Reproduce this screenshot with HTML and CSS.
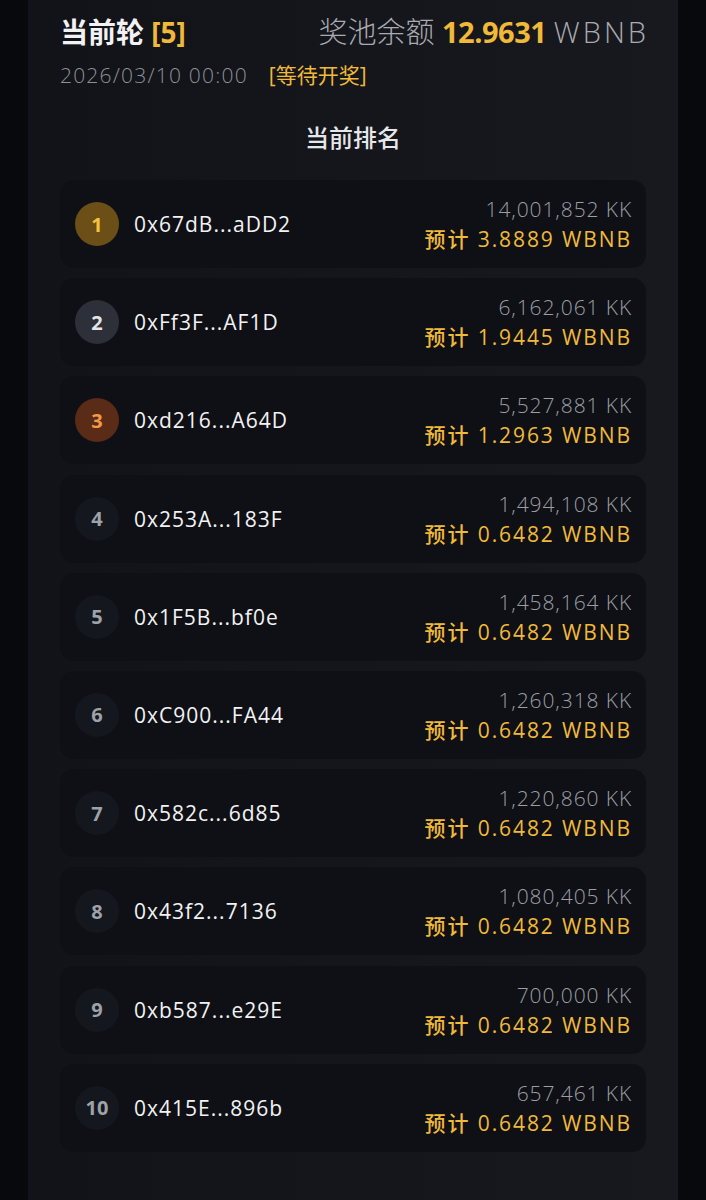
FILE: index.html
```html
<!DOCTYPE html>
<html lang="zh-CN">
<head>
    <meta charset="UTF-8">
    <meta name="viewport" content="width=device-width, initial-scale=1.0">
    <title>当前排名</title>
    <link rel="stylesheet" href="styles.css">
</head>
<body>
    <div class="panel">
        <div class="round-head">
            <div class="round-title">当前轮 <span class="gold">[5]</span></div>
            <div class="pool">奖池余额 <span class="pool-num">12.9631</span> <span class="pool-unit">WBNB</span></div>
        </div>
        <div class="round-sub">
            <span class="round-date">2026/03/10 00:00</span>
            <span class="gold">[等待开奖]</span>
        </div>

        <h2 class="rank-title">当前排名</h2>

        <div id="rank-list" class="rank-list">
            <!-- 排名行由脚本生成 -->
        </div>
    </div>

    <script>
        const ranking = [
            { addr: '0x67dB...aDD2', amount: '14,001,852', reward: '3.8889' },
            { addr: '0xFf3F...AF1D', amount: '6,162,061', reward: '1.9445' },
            { addr: '0xd216...A64D', amount: '5,527,881', reward: '1.2963' },
            { addr: '0x253A...183F', amount: '1,494,108', reward: '0.6482' },
            { addr: '0x1F5B...bf0e', amount: '1,458,164', reward: '0.6482' },
            { addr: '0xC900...FA44', amount: '1,260,318', reward: '0.6482' },
            { addr: '0x582c...6d85', amount: '1,220,860', reward: '0.6482' },
            { addr: '0x43f2...7136', amount: '1,080,405', reward: '0.6482' },
            { addr: '0xb587...e29E', amount: '700,000', reward: '0.6482' },
            { addr: '0x415E...896b', amount: '657,461', reward: '0.6482' }
        ];

        function cargarRanking() {
            const list = document.getElementById('rank-list');
            list.innerHTML = '';

            ranking.forEach((item, index) => {
                const row = document.createElement('div');
                row.classList.add('rank-row');

                const badge = document.createElement('span');
                badge.classList.add('rank-badge');
                if (index < 3) {
                    badge.classList.add('rank-' + (index + 1));
                }
                badge.textContent = index + 1;

                const addr = document.createElement('span');
                addr.classList.add('rank-addr');
                addr.textContent = item.addr;

                const info = document.createElement('div');
                info.classList.add('rank-info');

                const amount = document.createElement('div');
                amount.classList.add('rank-amount');
                amount.textContent = `${item.amount} KK`;

                const reward = document.createElement('div');
                reward.classList.add('rank-reward');
                reward.textContent = `预计 ${item.reward} WBNB`;

                info.appendChild(amount);
                info.appendChild(reward);

                row.appendChild(badge);
                row.appendChild(addr);
                row.appendChild(info);

                list.appendChild(row);
            });
        }

        cargarRanking();
    </script>
</body>
</html>
```

FILE: styles.css
```css
body {
    margin: 0;
    background-color: #08090c;
    font-family: "Open Sans", "Noto Sans CJK SC", sans-serif;
    color: #f2f2f4;
}
.panel {
    margin: 0 28px;
    min-height: 1200px;
    box-sizing: border-box;
    padding: 12px 32px 40px;
    background: linear-gradient(90deg, #111318 0%, #18191e 100%);
}
.gold {
    color: #f0b93a;
}
.round-head {
    display: flex;
    justify-content: space-between;
    align-items: baseline;
    white-space: nowrap;
}
.round-title {
    font-size: 28px;
    font-weight: 700;
    line-height: 40px;
}
.pool {
    font-size: 29px;
    font-weight: 300;
    color: #a9abb1;
    line-height: 40px;
    flex-shrink: 0;
}
.pool-num {
    color: #f0b93a;
    font-weight: 700;
    letter-spacing: -0.5px;
}
.pool-unit {
    letter-spacing: 3px;
    margin-right: -3px;
}
.round-sub {
    display: flex;
    gap: 21px;
    font-size: 21px;
    line-height: 30px;
    margin-top: 8px;
}
.round-date {
    color: #8e9097;
    font-weight: 300;
    letter-spacing: 1.2px;
}
.rank-title {
    margin: 30px 0 0;
    text-align: center;
    font-size: 24px;
    font-weight: 500;
    line-height: 36px;
    color: #e6e7ea;
}
.rank-list {
    margin-top: 24px;
    display: flex;
    flex-direction: column;
    gap: 10.2px;
}
.rank-row {
    display: flex;
    align-items: center;
    height: 88px;
    padding: 0 15px;
    background-color: #0e1015;
    border-radius: 14px;
}
.rank-badge {
    width: 44px;
    height: 44px;
    flex-shrink: 0;
    border-radius: 50%;
    display: flex;
    align-items: center;
    justify-content: center;
    background-color: #14171d;
    color: #9fa2a9;
    font-size: 20px;
    font-weight: 700;
}
.rank-1 {
    background-color: #6b4f16;
    color: #f5c33b;
}
.rank-2 {
    background-color: #2d3038;
    color: #e4e5e8;
}
.rank-3 {
    background-color: #5a2b17;
    color: #f39a45;
}
.rank-addr {
    margin-left: 15px;
    font-size: 21px;
    letter-spacing: 1px;
    color: #f2f2f4;
}
.rank-info {
    margin-left: auto;
    margin-right: -1px;
    text-align: right;
}
.rank-amount {
    font-size: 21px;
    line-height: 30px;
    color: #9c9ea4;
    font-weight: 300;
    letter-spacing: 0.9px;
}
.rank-reward {
    font-size: 21px;
    line-height: 30px;
    color: #f0b93a;
    font-weight: 500;
    letter-spacing: 1.9px;
}
```
